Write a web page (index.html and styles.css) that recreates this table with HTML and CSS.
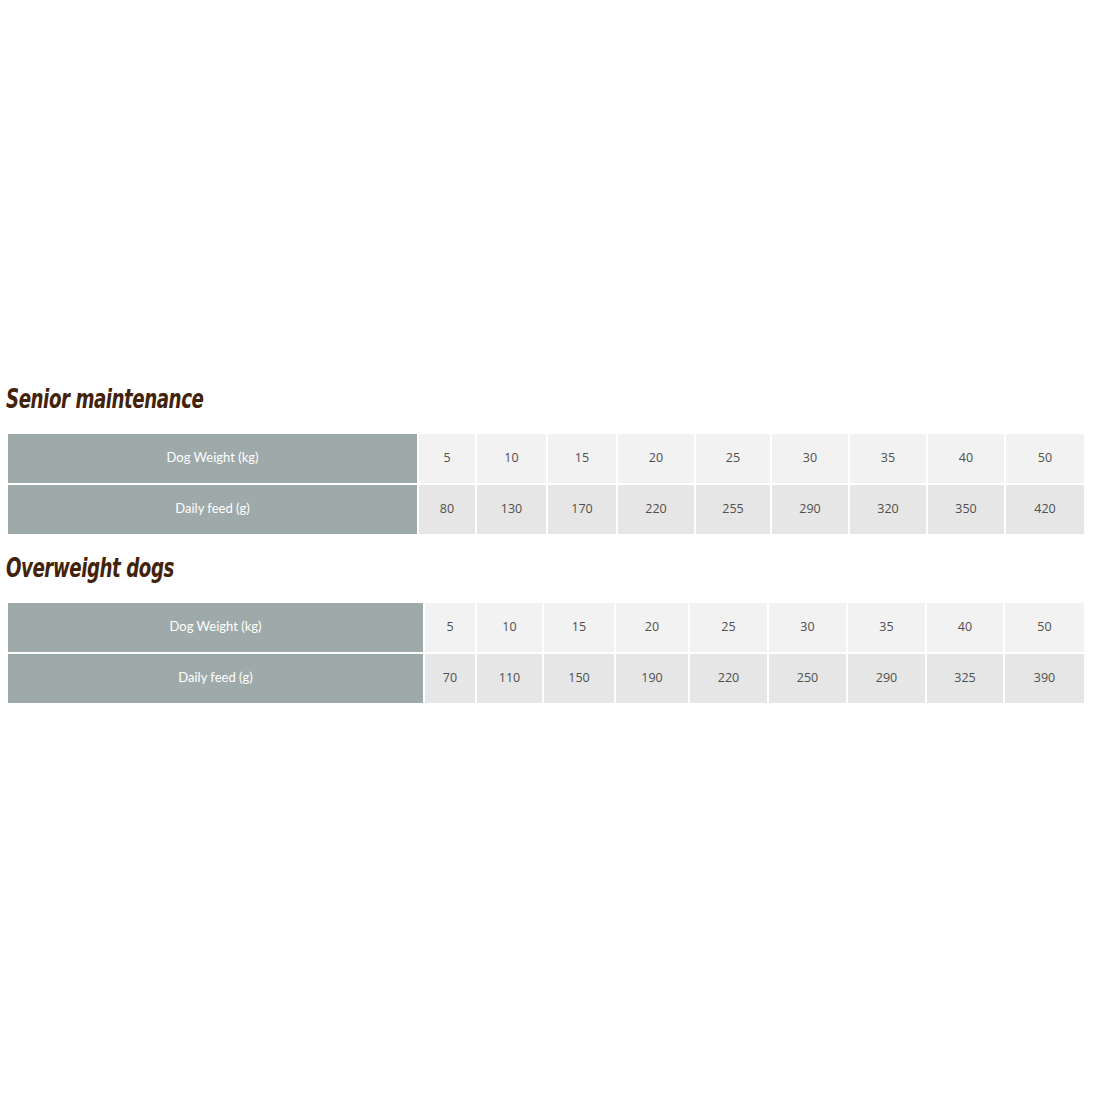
FILE: index.html
```html
<!DOCTYPE html>
<html lang="en">
<head>
<meta charset="utf-8">
<title>Feeding guide</title>
<link rel="stylesheet" href="styles.css">
</head>
<body>
<main class="page">
  <section class="guide">
    <h2 class="guide-title">Senior maintenance</h2>
    <div class="feed-table feed-table--senior">
      <div class="cell label">Dog Weight (kg)</div>
      <div class="cell light">5</div>
      <div class="cell light">10</div>
      <div class="cell light">15</div>
      <div class="cell light">20</div>
      <div class="cell light">25</div>
      <div class="cell light">30</div>
      <div class="cell light">35</div>
      <div class="cell light">40</div>
      <div class="cell light">50</div>
      <div class="cell label">Daily feed (g)</div>
      <div class="cell dark">80</div>
      <div class="cell dark">130</div>
      <div class="cell dark">170</div>
      <div class="cell dark">220</div>
      <div class="cell dark">255</div>
      <div class="cell dark">290</div>
      <div class="cell dark">320</div>
      <div class="cell dark">350</div>
      <div class="cell dark">420</div>
    </div>
  </section>
  <section class="guide">
    <h2 class="guide-title">Overweight dogs</h2>
    <div class="feed-table feed-table--overweight">
      <div class="cell label">Dog Weight (kg)</div>
      <div class="cell light">5</div>
      <div class="cell light">10</div>
      <div class="cell light">15</div>
      <div class="cell light">20</div>
      <div class="cell light">25</div>
      <div class="cell light">30</div>
      <div class="cell light">35</div>
      <div class="cell light">40</div>
      <div class="cell light">50</div>
      <div class="cell label">Daily feed (g)</div>
      <div class="cell dark">70</div>
      <div class="cell dark">110</div>
      <div class="cell dark">150</div>
      <div class="cell dark">190</div>
      <div class="cell dark">220</div>
      <div class="cell dark">250</div>
      <div class="cell dark">290</div>
      <div class="cell dark">325</div>
      <div class="cell dark">390</div>
    </div>
  </section>
</main>
</body>
</html>
```

FILE: styles.css
```css
html, body {
  margin: 0;
  padding: 0;
  background: #ffffff;
}

.page {
  padding: 380px 11px 0 8px;
}

.guide {
  margin-bottom: 15px;
}

.guide-title {
  margin: 0 0 18px -2px;
  height: 36px;
  line-height: 38px;
  font-family: "DejaVu Sans Condensed", "DejaVu Sans", sans-serif;
  font-weight: bold;
  font-style: italic;
  font-size: 27px;
  letter-spacing: -0.6px;
  color: #43220a;
  transform: scaleX(0.75);
  transform-origin: left center;
  white-space: nowrap;
}

.feed-table {
  display: grid;
  grid-auto-rows: 49px;
  gap: 2px;
}

.feed-table--senior {
  grid-template-columns: 409px 56px 69px 68px 76px 74px 76px 76px 76px 78px;
}

.feed-table--overweight {
  grid-template-columns: 415px 50px 65px 70px 72px 77px 77px 77px 76px 79px;
}

.cell {
  display: flex;
  align-items: center;
  justify-content: center;
  padding-bottom: 3px;
  font-family: "Open Sans", sans-serif;
  font-size: 12.5px;
  color: #4f4f4f;
}

.label {
  background: #9eaaa9;
  color: #ffffff;
  font-family: Lato, "Open Sans", sans-serif;
  font-size: 13px;
}

.light {
  background: #f2f2f2;
}

.dark {
  background: #e6e6e6;
}
```
